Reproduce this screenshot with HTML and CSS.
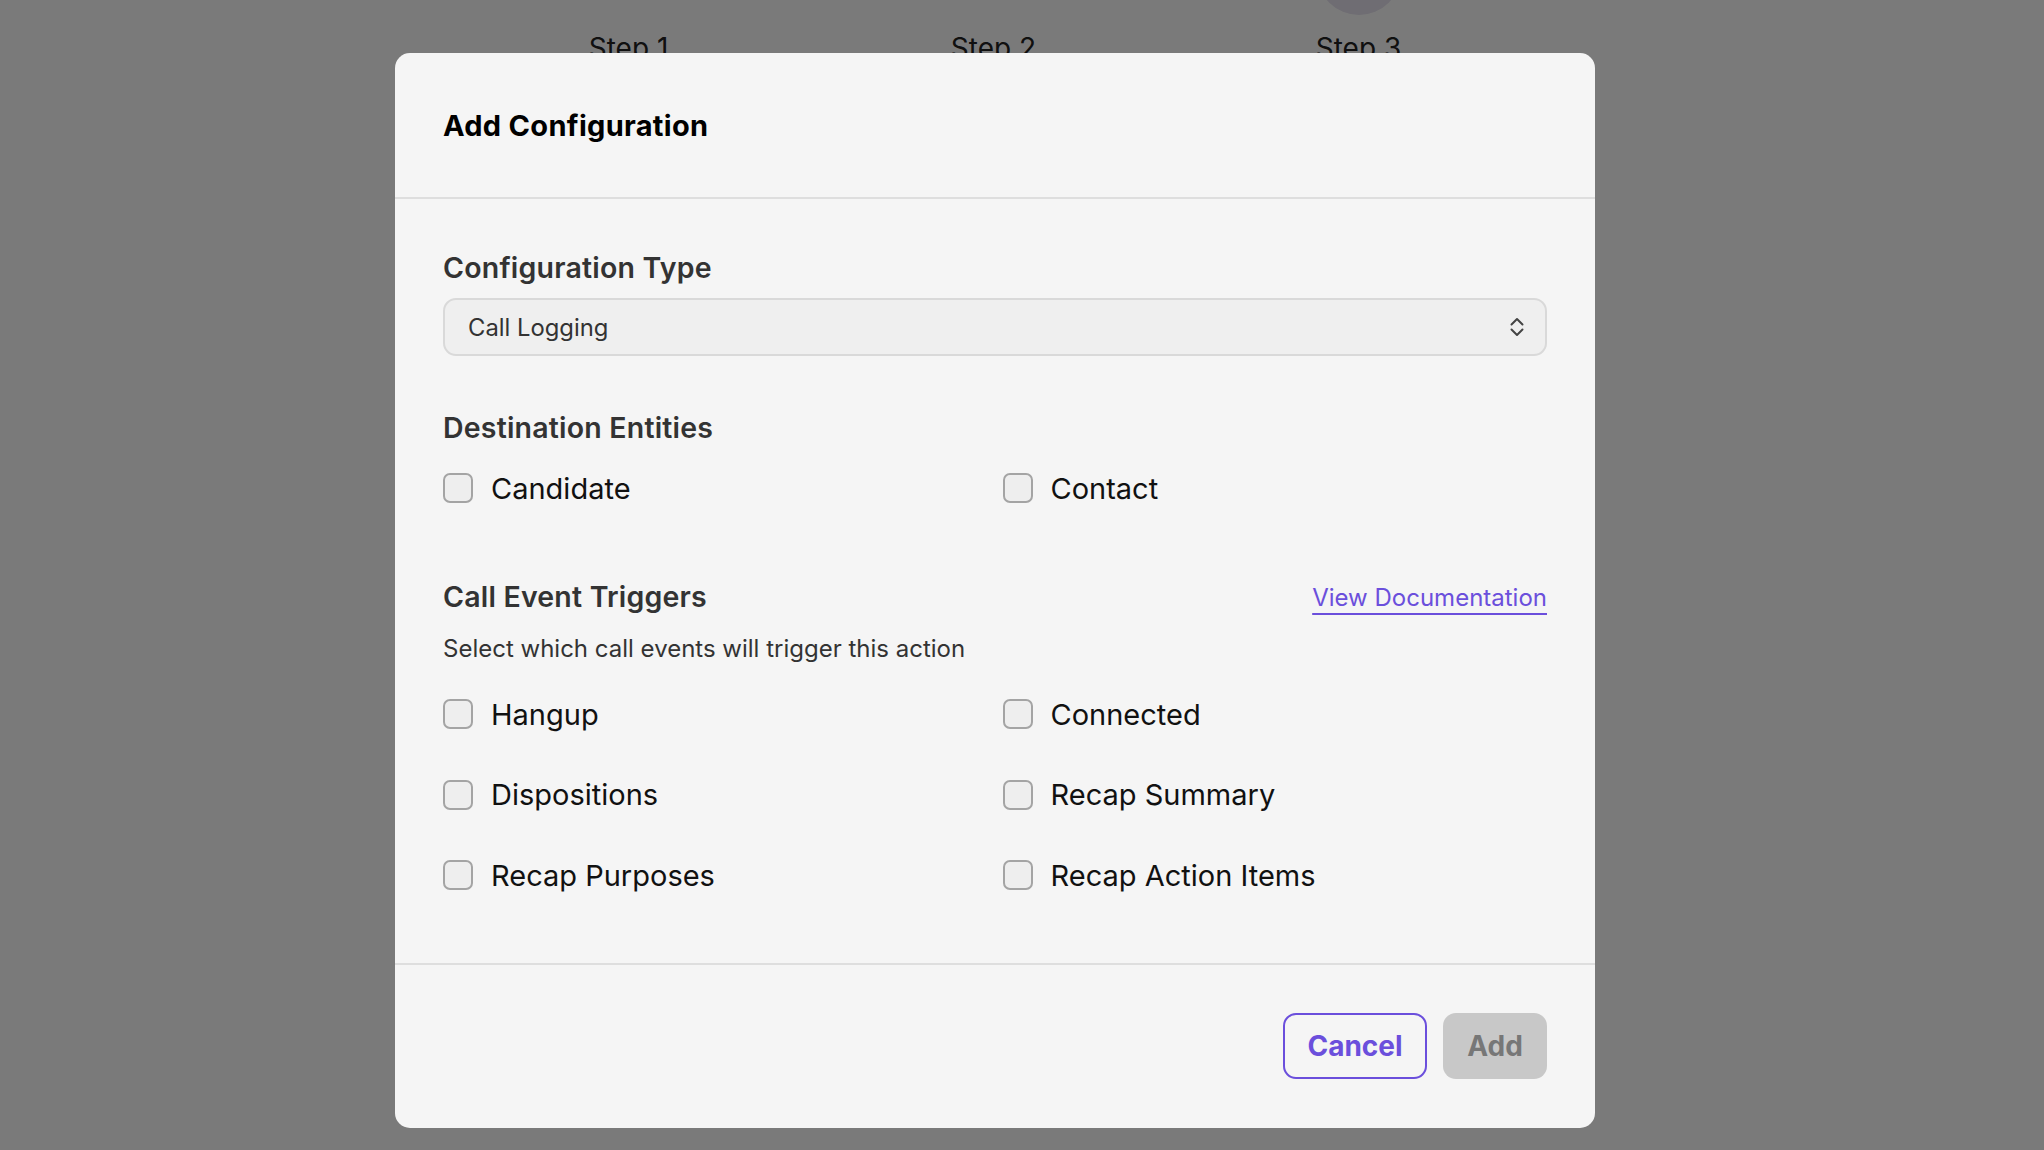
FILE: index.html
```html
<!DOCTYPE html>
<html>
  <head>
    <title>Add Configuration</title>
    <link rel="stylesheet" href="styles.css">
  </head>
  <body>
    <!-- the wizard behind the dialog -->
    <div id="steps">
      <div class="step">
        <div class="step-dot hidden"></div>
        <div class="step-label">Step 1</div>
      </div>
      <div class="step">
        <div class="step-dot hidden"></div>
        <div class="step-label">Step 2</div>
      </div>
      <div class="step">
        <div class="step-dot"></div>
        <div class="step-label">Step 3</div>
      </div>
    </div>

    <div id="overlay">
      <div class="modal">
        <div class="modal-header">Add Configuration</div>

        <div class="modal-body">
          <div class="section-label">Configuration Type</div>
          <div class="select">
            <span>Call Logging</span>
            <svg class="chevrons" width="14" height="22" viewBox="0 0 14 22">
              <path d="M1.5 8.5 L7 3 L12.5 8.5" fill="none" stroke="#444" stroke-width="2" stroke-linecap="round" stroke-linejoin="round"/>
              <path d="M1.5 13.5 L7 19 L12.5 13.5" fill="none" stroke="#444" stroke-width="2" stroke-linecap="round" stroke-linejoin="round"/>
            </svg>
          </div>

          <div class="section-label entities">Destination Entities</div>
          <div class="options first">
            <label class="option"><span class="box"></span>Candidate</label>
            <label class="option"><span class="box"></span>Contact</label>
          </div>

          <div class="section-head">
            <div class="section-label">Call Event Triggers</div>
            <a class="doc-link" href="#">View Documentation</a>
          </div>
          <div class="hint">Select which call events will trigger this action</div>
          <div class="options triggers">
            <label class="option"><span class="box"></span>Hangup</label>
            <label class="option"><span class="box"></span>Connected</label>
            <label class="option"><span class="box"></span>Dispositions</label>
            <label class="option"><span class="box"></span>Recap Summary</label>
            <label class="option"><span class="box"></span>Recap Purposes</label>
            <label class="option"><span class="box"></span>Recap Action Items</label>
          </div>
        </div>

        <div class="modal-footer">
          <button class="btn btn-cancel">Cancel</button>
          <button class="btn btn-add">Add</button>
        </div>
      </div>
    </div>
  </body>
</html>
```

FILE: styles.css
```css
body {
  margin: 0;
  font-family: Inter, "Liberation Sans", sans-serif;
  background-color: #fff;
  height: 1150px;
  overflow: hidden;
}

#steps {
  display: flex;
  margin-top: -69px;
  padding-left: 446px;
}

.step {
  width: 365px;
  display: flex;
  flex-direction: column;
  align-items: center;
}

.step-dot {
  width: 84px;
  height: 84px;
  border-radius: 50%;
  background-color: #e8e4f0;
}

.step-dot.hidden {
  visibility: hidden;
}

.step-label {
  margin-top: 17px;
  font-size: 28px;
  line-height: 32px;
  color: #222;
}

#overlay {
  position: absolute;
  top: 0;
  left: 0;
  right: 0;
  bottom: 0;
  background-color: rgba(0, 0, 0, .52);
  padding: 53px 0 0 395px;
}

.modal {
  width: 1200px;
  background-color: #f5f5f5;
  border-radius: 15px;
}

.modal-header {
  height: 144px;
  padding: 0 48px;
  display: flex;
  align-items: center;
  font-size: 29px;
  letter-spacing: .3px;
  font-weight: 700;
  color: #000;
  border-bottom: 2px solid #dedede;
}

.modal-body {
  padding: 53px 48px 68px;
}

.section-label {
  font-size: 28.5px;
  line-height: 32px;
  letter-spacing: .2px;
  font-weight: 600;
  color: #333;
}

.select {
  margin-top: 14px;
  height: 58px;
  box-sizing: border-box;
  border: 2px solid #d9d9d9;
  border-radius: 13px;
  background-color: #efefef;
  display: flex;
  align-items: center;
  justify-content: space-between;
  padding: 0 21px 0 23px;
  font-size: 23.8px;
  color: #333;
}

.section-label.entities {
  margin-top: 56px;
}

.options {
  display: grid;
  grid-template-columns: 1fr 1fr;
  column-gap: 15px;
  row-gap: 40.5px;
}

.options.first {
  margin-top: 24px;
}

.options.triggers {
  margin-top: 30px;
}

.option {
  display: flex;
  align-items: center;
  height: 40px;
  font-size: 29px;
  color: #111;
}

.box {
  width: 30px;
  height: 30px;
  box-sizing: border-box;
  border: 2.5px solid #a4a4a4;
  border-radius: 7px;
  background-color: #eee;
  margin-right: 18px;
}

.section-head {
  margin-top: 73px;
  display: flex;
  justify-content: space-between;
  align-items: center;
}

.doc-link {
  font-size: 24px;
  color: #6b4fdc;
  text-decoration: underline;
  text-decoration-thickness: 2px;
  text-underline-offset: 7px;
}

.hint {
  margin-top: 21px;
  font-size: 24px;
  line-height: 30px;
  color: #333;
}

.modal-footer {
  border-top: 2px solid #dedede;
  padding: 48px 48px 49px;
  display: flex;
  justify-content: flex-end;
  gap: 16px;
}

.btn {
  height: 66px;
  box-sizing: border-box;
  border-radius: 13px;
  font-family: Inter, "Liberation Sans", sans-serif;
  font-size: 28px;
  font-weight: 700;
}

.btn-cancel {
  width: 144px;
  background-color: transparent;
  border: 2px solid #6b4fdc;
  color: #6b4fdc;
}

.btn-add {
  width: 104px;
  background-color: #c8c8c8;
  border: none;
  color: #777;
}
```
